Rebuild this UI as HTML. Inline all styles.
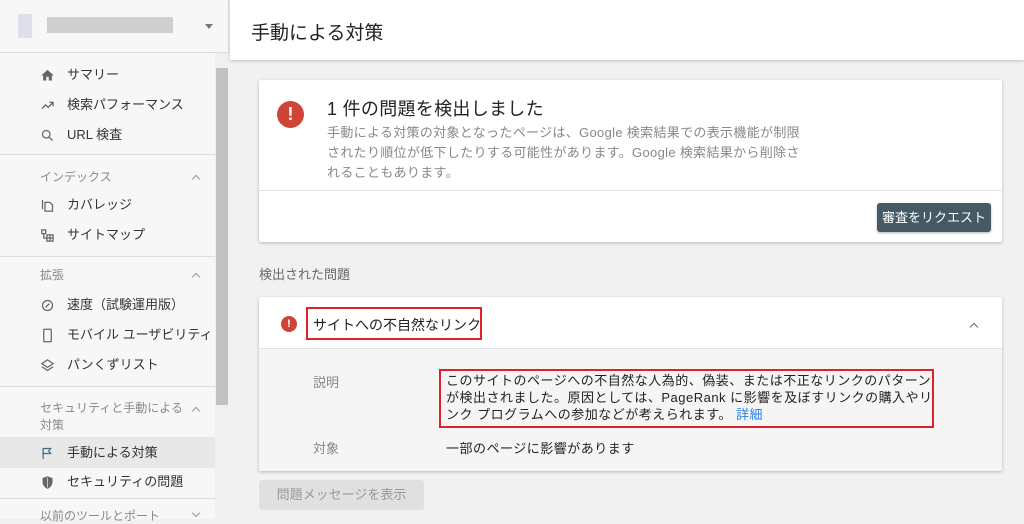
<!DOCTYPE html>
<html><head><meta charset="utf-8"><style>
*{margin:0;padding:0;box-sizing:border-box}
body{width:1024px;height:519px;overflow:hidden;background:#f1f1f1;font-family:"Liberation Sans","Noto Sans CJK JP",sans-serif;color:#212121;position:relative}
.abs{position:absolute}
#side{left:0;top:0;width:229px;height:519px;background:#f7f7f7;border-right:1px solid #ddd}
.it{position:absolute;left:67px;font-size:13px;color:#333;line-height:16px}
.ic{position:absolute;left:40px;width:15px;height:15px}
.sec{position:absolute;left:40px;font-size:12px;color:#888;line-height:16px}
.car{position:absolute;left:193px;width:6px;height:6px;border-left:1.5px solid #999;border-top:1.5px solid #999;transform:rotate(45deg)}
.hr{position:absolute;left:0;width:215px;height:1px;background:#dcdcdc}
.card{background:#fff;box-shadow:0 1px 3px rgba(0,0,0,.25);border-radius:2px}
.err{border-radius:50%;background:#d04437;color:#fff;font-weight:bold;text-align:center}
</style></head><body>
<div id="side" class="abs">
 <div class="abs" style="left:18px;top:14px;width:14px;height:24px;background:#dde0ea"></div>
 <div class="abs" style="left:47px;top:17px;width:126px;height:16px;background:#cfcfcf"></div>
 <div class="abs" style="left:205px;top:24px;border:4px solid transparent;border-top:5px solid #777"></div>
 <div class="hr" style="top:52px;width:229px"></div>
 <div class="abs" style="left:215px;top:53px;width:14px;height:466px;background:#f0f0f0"></div>
 <div class="abs" style="left:216px;top:68px;width:12px;height:337px;background:#c1c1c1"></div>
 <svg class="ic" style="top:68px" viewBox="0 0 24 24"><path d="M10 20v-6h4v6h5v-8h3L12 3 2 12h3v8z" fill="#666"/></svg><div class="it" style="top:67px">サマリー</div>
 <svg class="ic" style="top:98px" viewBox="0 0 24 24"><path d="M3 17l6-6 4 4 8-8M15 7h6v6" stroke="#666" stroke-width="2" fill="none"/></svg><div class="it" style="top:97px">検索パフォーマンス</div>
 <svg class="ic" style="top:128px" viewBox="0 0 24 24"><circle cx="10" cy="10" r="6" stroke="#666" stroke-width="2" fill="none"/><path d="M14.5 14.5L20 20" stroke="#666" stroke-width="2"/></svg><div class="it" style="top:127px">URL 検査</div>
 <div class="hr" style="top:154px"></div>
 <div class="sec" style="top:169px">インデックス</div><div class="car" style="top:176px"></div>
 <svg class="ic" style="top:198px" viewBox="0 0 24 24"><path d="M4 3v15M8 7h8l4 4v10H8z" stroke="#666" stroke-width="2" fill="none"/></svg><div class="it" style="top:197px">カバレッジ</div>
 <svg class="ic" style="top:228px" viewBox="0 0 24 24"><path d="M3 3h6v6H3zM11 11h10v10H11zM16 11v10M11 16h10M6 9v7h5" stroke="#666" stroke-width="2" fill="none"/></svg><div class="it" style="top:227px">サイトマップ</div>
 <div class="hr" style="top:256px"></div>
 <div class="sec" style="top:267px">拡張</div><div class="car" style="top:274px"></div>
 <svg class="ic" style="top:298px" viewBox="0 0 24 24"><circle cx="12" cy="12" r="8" stroke="#666" stroke-width="2" fill="none"/><path d="M9 15l6-6" stroke="#666" stroke-width="2"/></svg><div class="it" style="top:297px">速度（試験運用版）</div>
 <svg class="ic" style="top:328px" viewBox="0 0 24 24"><rect x="6" y="2" width="12" height="20" rx="1" stroke="#666" stroke-width="2" fill="none"/></svg><div class="it" style="top:327px">モバイル ユーザビリティ</div>
 <svg class="ic" style="top:358px" viewBox="0 0 24 24"><path d="M12 3l9 6-9 6-9-6zM3 14l9 6 9-6" stroke="#666" stroke-width="2" fill="none"/></svg><div class="it" style="top:357px">パンくずリスト</div>
 <div class="hr" style="top:386px"></div>
 <div class="sec" style="top:400px;line-height:17px">セキュリティと手動による<br>対策</div><div class="car" style="top:408px"></div>
 <div class="abs" style="left:0;top:437px;width:215px;height:31px;background:#e8e8e8"></div>
 <svg class="ic" style="top:446px" viewBox="0 0 24 24"><path d="M5 21V4h12l-3 4 3 4H5" stroke="#4a6a80" stroke-width="2" fill="none"/></svg><div class="it" style="top:445px">手動による対策</div>
 <svg class="ic" style="top:475px" viewBox="0 0 24 24"><path d="M12 2l8 3v6c0 5-3.5 9.5-8 11-4.5-1.5-8-6-8-11V5z" fill="#666"/><path d="M12 4v16" stroke="#fff" stroke-width="1"/></svg><div class="it" style="top:474px">セキュリティの問題</div>
 <div class="hr" style="top:498px"></div>
 <div class="sec" style="top:508px">以前のツールとポート</div><div class="car" style="top:510px;transform:rotate(225deg)"></div>
</div>
<div class="abs" style="left:230px;top:0;width:794px;height:60px;background:#fff;box-shadow:0 1px 3px rgba(0,0,0,.2)">
 <div class="abs" style="left:21px;top:18px;font-size:19px;color:#222">手動による対策</div>
</div>
<div class="abs card" style="left:259px;top:80px;width:743px;height:162px">
 <div class="abs err" style="left:18px;top:21px;width:27px;height:27px;font-size:18px;line-height:27px">!</div>
 <div class="abs" style="left:68px;top:15px;font-size:18px;color:#222;letter-spacing:.3px">1 件の問題を検出しました</div>
 <div class="abs" style="left:68px;top:43px;white-space:nowrap;font-size:13px;line-height:20px;color:#888;letter-spacing:.32px">手動による対策の対象となったページは、Google 検索結果での表示機能が制限<br>されたり順位が低下したりする可能性があります。Google 検索結果から削除さ<br>れることもあります。</div>
 <div class="abs" style="left:0;top:110px;width:743px;height:1px;background:#e0e0e0"></div>
 <div class="abs" style="left:618px;top:123px;width:114px;height:29px;background:#455a64;border-radius:3px;color:#fff;font-size:13px;line-height:29px;text-align:center;box-shadow:0 1px 2px rgba(0,0,0,.3)">審査をリクエスト</div>
</div>
<div class="abs" style="left:259px;top:264px;font-size:13px;color:#666">検出された問題</div>
<div class="abs card" style="left:259px;top:297px;width:743px;height:174px;overflow:hidden">
 <div class="abs" style="left:0;top:51px;width:743px;height:123px;background:#f5f5f5;border-top:1px solid #e0e0e0"></div>
 <div class="abs err" style="left:22px;top:19px;width:16px;height:16px;font-size:11px;line-height:16px">!</div>
 <div class="abs" style="left:47px;top:10px;width:176px;height:33px;border:2px solid #e0202a"></div>
 <div class="abs" style="left:54px;top:18px;font-size:14px">サイトへの不自然なリンク</div>
 <div class="car" style="left:712px;top:27px;border-color:#666"></div>
 <div class="abs" style="left:54px;top:75px;font-size:13px;color:#888">説明</div>
 <div class="abs" style="left:180px;top:72px;width:495px;height:59px;border:2px solid #e0202a"></div>
 <div class="abs" style="left:187px;top:75px;white-space:nowrap;font-size:13px;line-height:17px;color:#222;letter-spacing:.5px">このサイトのページへの不自然な人為的、偽装、または不正なリンクのパターン<br>が検出されました。原因としては、PageRank に影響を及ぼすリンクの購入やリ<br>ンク プログラムへの参加などが考えられます。 <span style="color:#2a7ee0">詳細</span></div>
 <div class="abs" style="left:54px;top:141px;font-size:13px;color:#888">対象</div>
 <div class="abs" style="left:187px;top:141px;font-size:13px;color:#222;letter-spacing:.5px">一部のページに影響があります</div>
</div>
<div class="abs" style="left:259px;top:480px;width:165px;height:30px;background:#e0e0e0;border-radius:3px;color:#999;font-size:13px;line-height:30px;text-align:center">問題メッセージを表示</div>
</body></html>
